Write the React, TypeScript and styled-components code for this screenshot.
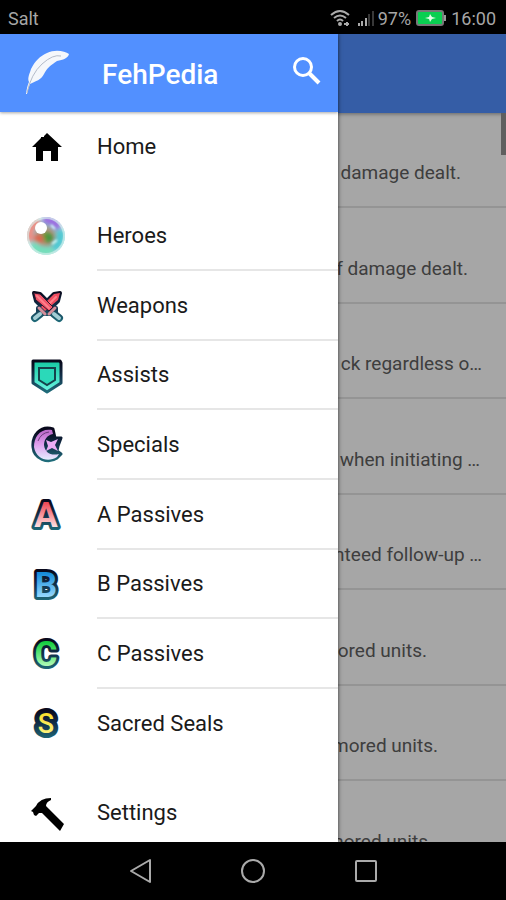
import React from "react";
import styled, { createGlobalStyle } from "styled-components";

const GlobalStyle = createGlobalStyle`
  * { box-sizing: border-box; }
  body { margin: 0; background: #000; font-family: Roboto, "Liberation Sans", sans-serif; }
  button { font: inherit; padding: 0; border: 0; background: none; cursor: pointer; }
`;

const Screen = styled.div`
  height: 100vh;
  display: flex;
  flex-direction: column;
  overflow: hidden;
`;

const StatusBar = styled.header`
  flex: none;
  height: 34px;
  padding: 2px 10px 0 8px;
  display: flex;
  align-items: center;
  justify-content: space-between;
  background: #000;
  color: #a6a6a6;
  font-size: 18px;
`;

const StatusGroup = styled.div<{ $gap: number }>`
  display: flex;
  align-items: center;
  gap: ${(p) => p.$gap}px;
`;

const Stage = styled.main`
  position: relative;
  flex: 1;
  min-height: 0;
  overflow: hidden;
  background: #fff;
`;

const PageBar = styled.div`
  height: 79px;
  background: #5290ff;
  box-shadow: 0 1px 4px rgba(0, 0, 0, 0.4);
`;

const SkillList = styled.ul`
  margin: 0;
  padding: 0;
  list-style: none;
`;

const SkillRow = styled.li<{ $inset: number }>`
  height: 96px;
  padding: 26px ${(p) => p.$inset}px 0 0;
  display: flex;
  align-items: center;
  justify-content: flex-end;
  border-bottom: 2px solid #e4e4e4;
  color: #606060;
  font-size: 19px;
  white-space: nowrap;
  &:nth-child(odd) { height: 95px; }
`;

const Scrim = styled.div`
  position: absolute;
  inset: 0;
  background: rgba(0, 0, 0, 0.35);
`;

const ScrollThumb = styled.div`
  position: absolute;
  top: 79px;
  right: 0;
  width: 5px;
  height: 42px;
  background: #5f5f5f;
`;

const Drawer = styled.aside`
  position: absolute;
  top: 0;
  bottom: 0;
  left: 0;
  width: 67%;
  max-width: 338px;
  overflow: hidden;
  background: #fff;
  box-shadow: 0 0 4px rgba(0, 0, 0, 0.7);
`;

const DrawerBar = styled.div`
  position: relative;
  height: 78px;
  padding: 0 16px 0 24px;
  display: flex;
  align-items: center;
  background: #5290ff;
  box-shadow: 0 1px 3px rgba(0, 0, 0, 0.35);
`;

const Title = styled.h1`
  flex: 1;
  margin: 4px 0 0 32px;
  color: #fff;
  font-size: 28px;
  font-weight: 500;
  line-height: 32px;
`;

const SearchButton = styled.button`
  width: 30px;
  height: 30px;
  margin-bottom: 4px;
`;

const Menu = styled.nav`
  display: flex;
  flex-direction: column;
  gap: 19px;
`;

const MenuGroup = styled.div`
  display: flex;
  flex-direction: column;
`;

const MenuItem = styled.button`
  width: 100%;
  height: 70px;
  display: flex;
  align-items: center;
  color: #1a1a1a;
  font-size: 22px;
  text-align: left;
  &:nth-child(3n) { height: 69px; }
`;

const IconCell = styled.span`
  flex: none;
  width: 97px;
  padding-left: 26px;
  display: flex;
`;

const MenuLabel = styled.span<{ $divided: boolean }>`
  flex: 1;
  height: 100%;
  display: flex;
  align-items: center;
  border-bottom: 2px solid ${(p) => (p.$divided ? "#e6e6e6" : "transparent")};
`;

const NavBar = styled.footer`
  flex: none;
  height: 58px;
  padding: 0 84px;
  display: flex;
  align-items: center;
  justify-content: space-around;
  background: #000;
`;

const NavButton = styled.button`
  width: 28px;
  height: 28px;
`;

const Svg40 = ({ children }: { children: React.ReactNode }) => (
  <svg width="40" height="40" viewBox="0 0 40 40" aria-hidden="true">{children}</svg>
);

const HomeIcon = () => (
  <Svg40>
    <path d="M21 6 36 20H32V34H25V24H17V34H10V20H6L15 11V10H18V9Z" fill="#000" />
  </Svg40>
);

const OrbIcon = () => (
  <Svg40>
    <defs>
      <radialGradient id="orb" cx=".5" cy=".52" r=".5">
        <stop offset="0" stopColor="#5f9a2a" />
        <stop offset=".35" stopColor="#a99479" />
        <stop offset=".72" stopColor="#8fc4cc" />
        <stop offset="1" stopColor="#c7e9e8" />
      </radialGradient>
      <filter id="soft" x="-40%" y="-40%" width="180%" height="180%"><feGaussianBlur stdDeviation="2" /></filter>
      <filter id="glow" x="-40%" y="-40%" width="180%" height="180%"><feGaussianBlur stdDeviation=".8" /></filter>
      <clipPath id="orbClip"><circle cx="20" cy="20" r="19" /></clipPath>
    </defs>
    <circle cx="20" cy="20" r="19" fill="url(#orb)" />
    <g clipPath="url(#orbClip)">
      <g filter="url(#soft)" fill="none" strokeWidth="7">
        <path d="M5 25Q1 12 13 5" stroke="#f08a80" />
        <path d="M17 4Q29 3 32 13" stroke="#9a68e0" />
        <path d="M34 14Q37 25 28 33" stroke="#4cc9d3" />
        <path d="M7 28Q13 38 27 34" stroke="#72e0b8" />
        <path d="M9 21 17 24" stroke="#e2604a" />
        <path d="M20 24 26 20" stroke="#3f9640" />
      </g>
      <circle cx="20" cy="20" r="18" fill="none" stroke="#d9f1ee" strokeWidth="2" opacity=".6" />
      <circle cx="15" cy="12" r="6" fill="#fff" />
      <path d="M26 28 31 24M25 9 29 13" stroke="#d8ffff" strokeWidth="2" filter="url(#glow)" />
    </g>
  </Svg40>
);

const Outline = () => (
  <defs>
    <linearGradient id="edge" x1="0" y1="0" x2="0" y2="40" gradientUnits="userSpaceOnUse">
      <stop offset=".15" stopColor="#08091c" />
      <stop offset=".5" stopColor="#12304a" />
      <stop offset="1" stopColor="#237b86" />
    </linearGradient>
  </defs>
);

const SwordsIcon = () => (
  <Svg40>
    <Outline />
    <g strokeLinejoin="round" strokeLinecap="round" fill="none">
      <g fill="url(#edge)" stroke="url(#edge)" strokeWidth="4">
        <path d="M8 7 14 8 21 15 28 8 34 7 32 15 25 22 30 22 30 28 21 28 12 28 12 22 17 22 10 15Z" />
        <path d="M9 32 14 28M33 32 28 28" strokeWidth="8" />
      </g>
      <path d="M34 7 28 8 15 21 19 25 32 14Z" fill="#ef4e60" />
      <path d="M30 11 20 21" stroke="#ff8088" strokeWidth="2" />
      <path d="M8 7 14 8 27 21 23 25 10 14Z" fill="#f0566a" stroke="#31152c" strokeWidth="1" />
      <path d="M11 10 23 22" stroke="#ff7f8b" strokeWidth="2" />
      <path d="M13 22 19 28M29 22 23 28" stroke="#d58e9a" strokeWidth="3" />
      <path d="M9 32 14 28M33 32 28 28" stroke="#a3cdd4" strokeWidth="4" />
    </g>
  </Svg40>
);

const ShieldIcon = () => (
  <Svg40>
    <Outline />
    <defs><linearGradient id="mint" x2="0" y2="1"><stop stopColor="#15c9a3" /><stop offset="1" stopColor="#6cf5e2" /></linearGradient></defs>
    <path d="M7 5H34L35 7V27L21 36 7 27V7Z" fill="url(#mint)" stroke="url(#edge)" strokeWidth="3" strokeLinejoin="round" />
    <path d="M13 12H29V24L21 29 13 24Z" fill="#2bd9b9" stroke="#15424c" strokeWidth="2" />
  </Svg40>
);

const MoonIcon = () => (
  <Svg40>
    <Outline />
    <defs><linearGradient id="moon" x2="0" y2="1"><stop offset=".1" stopColor="#c06fce" /><stop offset=".5" stopColor="#dfa0ee" /><stop offset="1" stopColor="#e5edff" /></linearGradient></defs>
    <path d="M27 4C14 0 6 11 7 22 8 34 22 39 31 33L35 29 31 26 32 21 35 13 29 13Z" fill="url(#edge)" stroke="url(#edge)" strokeWidth="3" strokeLinejoin="round" />
    <path d="M26 5C14 3 8 12 8 22 10 34 22 38 31 32L33 29C25 31 19 28 18 20 18 15 21 10 27 9Z" fill="url(#moon)" />
    <path d="M12 16Q15 8 23 7" fill="none" stroke="#6c3d7d" strokeWidth="1" />
    <path d="M20 15 25 17 32 14 29 20 32 26 26 23 20 26 22 21Z" fill="#ecacf5" />
  </Svg40>
);

const LetterIcon = ({ letter, top, bottom, seal = false }: { letter: string; top: string; bottom: string; seal?: boolean }) => (
  <Svg40>
    <Outline />
    <defs>
      <linearGradient id={`fill${letter}`} x1="0" y1="8" x2="0" y2="33" gradientUnits="userSpaceOnUse">
        <stop stopColor={top} /><stop offset="1" stopColor={bottom} />
      </linearGradient>
    </defs>
    <text x="20" y={seal ? 29 : 32} textAnchor="middle" fontFamily="Roboto, sans-serif" fontSize={seal ? 27 : 35} fontWeight={seal ? 500 : 700}
      fill={`url(#fill${letter})`} stroke="url(#edge)" strokeWidth={seal ? 10 : 6} strokeLinejoin="round" paintOrder="stroke">{letter}</text>
  </Svg40>
);

const HammerIcon = () => (
  <Svg40>
    <path d="M5 18 10 13Q14 5 25 5V7Q20 9 20 13L23 16 38 31 34 38 16 20 13 20 10 23 8 22 7 19Z" fill="#000" />
  </Svg40>
);

const FeatherIcon = () => (
  <svg width="46" height="48" viewBox="0 0 46 48" aria-hidden="true">
    <path d="M2 45Q3 37 5 33C3 29 6 24 7 20 11 12 16 7 23 4 31 0 41 2 45 5 44 9 39 11 33 12 27 16 23 19 20 25 17 31 12 32 6 35Q4 39 3 45Z" fill="#f5f7fb" />
    <path d="M3 44Q7 25 18 15T37 7" fill="none" stroke="#b4bbc9" strokeWidth="1" />
  </svg>
);

const SearchIcon = () => (
  <svg width="30" height="30" viewBox="0 0 30 30" fill="none" stroke="#fff" aria-hidden="true">
    <circle cx="11" cy="11" r="8.500" strokeWidth="3" />
    <path d="M17 17 27 27" strokeWidth="4" />
  </svg>
);

const WifiIcon = () => (
  <svg width="22" height="18" viewBox="0 0 22 18" fill="none" stroke="#aaa" strokeWidth="2" aria-hidden="true">
    <path d="M1 6Q10-2 19 6M4 9Q10 4 16 9M7 12Q10 9 13 12" />
    <circle cx="10" cy="15" r="1" fill="#aaa" />
    <path d="M14 15H19M17 13V17" />
  </svg>
);

const SignalIcon = () => (
  <svg width="17" height="17" viewBox="0 0 17 17" strokeWidth="2" aria-hidden="true">
    <path d="M2 13V16M5 11V16M9 8V16" stroke="#aaa" />
    <path d="M12 4V16M16 1V16" stroke="#383838" />
  </svg>
);

const BatteryIcon = () => (
  <svg width="30" height="16" viewBox="0 0 30 16" aria-hidden="true">
    <rect x="1" y="1" width="26" height="14" rx="2" fill="#09cf51" stroke="#777" strokeWidth="2" />
    <path d="M29 5V11" stroke="#999" strokeWidth="2" />
    <path d="M9 8 13 7 14 4 16 7 20 8 16 9 14 12 13 9Z" fill="#e2ffe8" />
  </svg>
);

const skills = [
  { text: "damage dealt.", inset: 45 },
  { text: "f damage dealt.", inset: 38 },
  { text: "ck regardless o…", inset: 24 },
  { text: "when initiating …", inset: 26 },
  { text: "nteed follow-up …", inset: 24 },
  { text: "ored units.", inset: 79 },
  { text: "mored units.", inset: 68 },
  { text: "mored units.", inset: 73 },
];

const groups = [
  [{ label: "Home", icon: <HomeIcon /> }],
  [
    { label: "Heroes", icon: <OrbIcon /> },
    { label: "Weapons", icon: <SwordsIcon /> },
    { label: "Assists", icon: <ShieldIcon /> },
    { label: "Specials", icon: <MoonIcon /> },
    { label: "A Passives", icon: <LetterIcon letter="A" top="#ee4a57" bottom="#ffe7e8" /> },
    { label: "B Passives", icon: <LetterIcon letter="B" top="#168bd9" bottom="#9cdcff" /> },
    { label: "C Passives", icon: <LetterIcon letter="C" top="#12cd3f" bottom="#b9ffbd" /> },
    { label: "Sacred Seals", icon: <LetterIcon letter="S" top="#f6de29" bottom="#fff68a" seal /> },
  ],
  [{ label: "Settings", icon: <HammerIcon /> }],
];

export default function App() {
  return (
    <Screen>
      <GlobalStyle />
      <StatusBar>
        <span>Salt</span>
        <StatusGroup $gap={5}>
          <WifiIcon />
          <StatusGroup $gap={4}><SignalIcon /><span>97%</span></StatusGroup>
          <BatteryIcon />
          <span>16:00</span>
        </StatusGroup>
      </StatusBar>
      <Stage>
        <PageBar />
        <SkillList>
          {skills.map((s, i) => <SkillRow key={i} $inset={s.inset}>{s.text}</SkillRow>)}
        </SkillList>
        <Scrim />
        <ScrollThumb />
        <Drawer>
          <DrawerBar>
            <FeatherIcon />
            <Title>FehPedia</Title>
            <SearchButton aria-label="Search"><SearchIcon /></SearchButton>
          </DrawerBar>
          <Menu>
            {groups.map((items, g) => (
              <MenuGroup key={g}>
                {items.map((item, i) => (
                  <MenuItem key={item.label}>
                    <IconCell>{item.icon}</IconCell>
                    <MenuLabel $divided={i < items.length - 1}>{item.label}</MenuLabel>
                  </MenuItem>
                ))}
              </MenuGroup>
            ))}
          </Menu>
        </Drawer>
      </Stage>
      <NavBar>
        <NavButton aria-label="Back">
          <svg width="28" height="28" viewBox="0 0 28 28" fill="none" stroke="#aaa" strokeWidth="2" strokeLinejoin="round"><path d="M5 14 24 3V25Z" /></svg>
        </NavButton>
        <NavButton aria-label="Home screen">
          <svg width="28" height="28" viewBox="0 0 28 28" fill="none" stroke="#aaa" strokeWidth="2"><circle cx="14" cy="14" r="11" /></svg>
        </NavButton>
        <NavButton aria-label="Recent apps">
          <svg width="28" height="28" viewBox="0 0 28 28" fill="none" stroke="#aaa" strokeWidth="2"><rect x="4" y="4" width="20" height="20" rx="1" /></svg>
        </NavButton>
      </NavBar>
    </Screen>
  );
}
